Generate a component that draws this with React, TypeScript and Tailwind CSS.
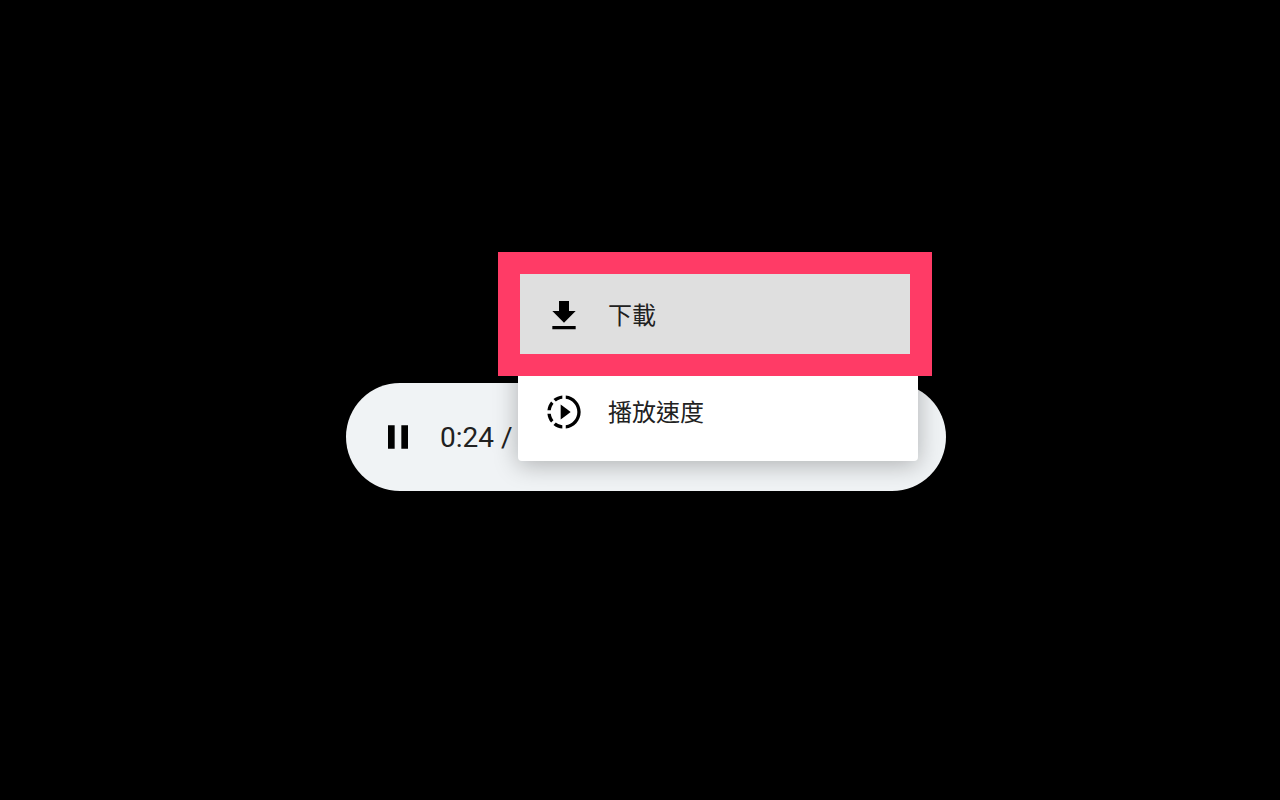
import React from 'react';

const fontStack = "font-['Roboto','Noto_Sans_CJK_TC',sans-serif]";

const DownloadIcon = () => (
  <svg viewBox="0 0 24 24" className="w-10 h-10 shrink-0" fill="#000">
    <path d="M19 9h-4V3H9v6H5l7 7 7-7zM5 18v2h14v-2H5z" />
  </svg>
);

const SpeedIcon = () => (
  <svg viewBox="0 0 24 24" className="w-10 h-10 shrink-0" fill="#000">
    <path d="M13.05 9.79L10 7.5v9l3.05-2.29L16 12zM11 4.07V2.05c-2.01.2-3.84 1-5.32 2.21L7.1 5.69c1.11-.86 2.44-1.44 3.9-1.62zM5.69 7.1L4.26 5.68C3.05 7.16 2.25 8.99 2.05 11h2.02c.18-1.46.76-2.79 1.62-3.9zM4.07 13H2.05c.2 2.01 1 3.84 2.21 5.32l1.43-1.43c-.86-1.1-1.44-2.43-1.62-3.89zm1.61 6.74C7.16 20.95 9 21.75 11 21.95v-2.02c-1.46-.18-2.79-.76-3.9-1.62l-1.42 1.43zM22 12c0 5.16-3.92 9.42-8.95 9.95v-2.02C16.97 19.41 20 16.05 20 12s-3.03-7.41-6.95-7.93V2.05C18.08 2.58 22 6.84 22 12z" />
  </svg>
);

const PauseIcon = () => (
  <svg viewBox="0 0 24 24" className="w-10 h-10 shrink-0" fill="#000">
    <path d="M6 19h4V5H6v14zm8-14v14h4V5h-4z" />
  </svg>
);

export default function App() {
  return (
    <div className={`h-screen bg-black overflow-hidden pt-[383px] pl-[346px] ${fontStack}`}>
      {/* Player pill */}
      <div className="relative w-[600px] h-[108px] rounded-[54px] bg-[#f0f3f5] flex items-center pl-8 gap-[22px]">
        <PauseIcon />
        <span className="text-[28px] leading-none text-[#212121] pt-[2px]">0:24 /</span>

        {/* Overflow menu */}
        <div className="absolute left-[172px] bottom-[30px] w-[400px] bg-white rounded-b shadow-[0_4px_24px_rgba(0,0,0,0.28)]">
          <div className="-ml-5 -mr-[14px] h-[124px] border-[22px] border-[#ff3b66] bg-[#dfdfdf] flex items-center gap-6 pl-6 pt-1">
            <DownloadIcon />
            <span className="text-2xl text-[#212121]">下載</span>
          </div>
          <div className="h-[85px] flex items-center gap-6 pl-[26px] pb-[13px]">
            <SpeedIcon />
            <span className="text-2xl text-[#212121] pt-[2px]">播放速度</span>
          </div>
        </div>
      </div>
    </div>
  );
}
